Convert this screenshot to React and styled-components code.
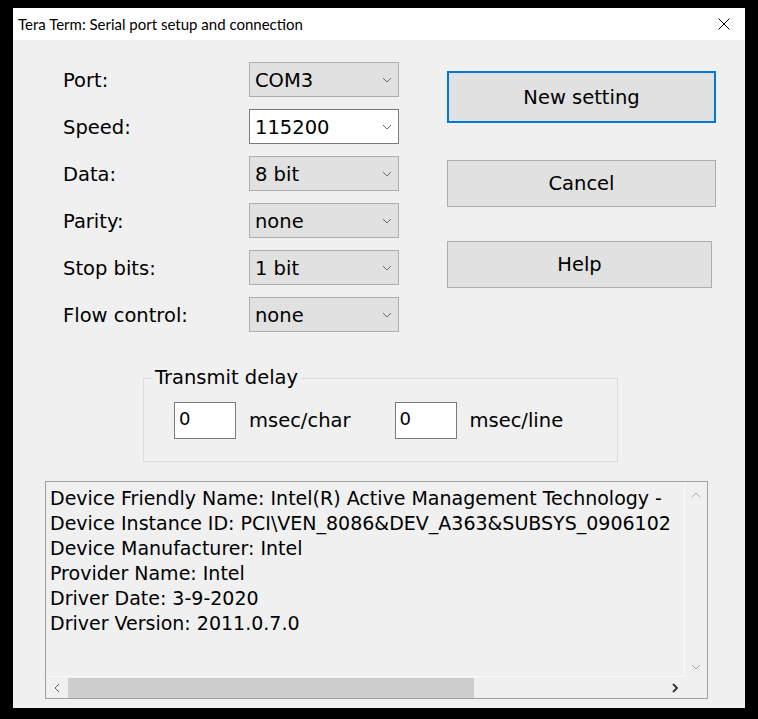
import React from 'react';
import styled, { createGlobalStyle } from 'styled-components';

const GlobalStyle = createGlobalStyle`
  html, body {
    margin: 0;
    padding: 0;
    background: #000;
  }
  #root {
    min-height: 719px;
    overflow: hidden;
  }
`;

const FIELDS = [
  { label: 'Port:', value: 'COM3' },
  { label: 'Speed:', value: '115200', focused: true },
  { label: 'Data:', value: '8 bit' },
  { label: 'Parity:', value: 'none' },
  { label: 'Stop bits:', value: '1 bit' },
  { label: 'Flow control:', value: 'none' },
];

// only the part that fits in the box is shown, as in the dialog
const DEVICE_INFO = [
  'Device Friendly Name: Intel(R) Active Management Technology -',
  'Device Instance ID: PCI\\VEN_8086&DEV_A363&SUBSYS_0906102',
  'Device Manufacturer: Intel',
  'Provider Name: Intel',
  'Driver Date: 3-9-2020',
  'Driver Version: 2011.0.7.0',
];

function Chevron({ dir = 'down', color = '#707070', bold }) {
  const pts = {
    down: '1,1 5,5 9,1',
    up: '1,5 5,1 9,5',
    left: '5,1 1,5 5,9',
    right: '1,1 5,5 1,9',
  }[dir];
  const vertical = dir === 'down' || dir === 'up';
  return (
    <svg width={vertical ? 10 : 6} height={vertical ? 6 : 10} viewBox={vertical ? '0 0 10 6' : '0 0 6 10'}>
      <polyline points={pts} fill="none" stroke={color} strokeWidth={bold ? 2 : 1} />
    </svg>
  );
}

function App() {
  return (
    <>
      <GlobalStyle />
      <Dialog>
        <TitleBar>
          <Title>Tera Term: Serial port setup and connection</Title>
          <CloseBox>
            <svg width="12" height="12" viewBox="0 0 12 12">
              <path d="M0.5 0.5 L11.5 11.5 M11.5 0.5 L0.5 11.5" stroke="#000" strokeWidth="1" />
            </svg>
          </CloseBox>
        </TitleBar>

        <TopSection>
          <FormGrid>
            {FIELDS.map((f) => (
              <React.Fragment key={f.label}>
                <Label>{f.label}</Label>
                <Combo focused={f.focused}>
                  <span>{f.value}</span>
                  <Chevron dir="down" color="#6a6a6a" />
                </Combo>
              </React.Fragment>
            ))}
          </FormGrid>
          <ButtonColumn>
            <Button primary>New setting</Button>
            <Button gap={37}>Cancel</Button>
            <Button gap={34} narrow>Help</Button>
          </ButtonColumn>
        </TopSection>

        <GroupBox>
          <Legend>Transmit delay</Legend>
          <DelayRow>
            <NumberInput>0</NumberInput>
            <UnitLabel>msec/char</UnitLabel>
            <NumberInput>0</NumberInput>
            <UnitLabel>msec/line</UnitLabel>
          </DelayRow>
        </GroupBox>

        <InfoBox>
          <InfoText>
            {DEVICE_INFO.map((line) => (
              <InfoLine key={line}>{line}</InfoLine>
            ))}
          </InfoText>
          <VScroll>
            <Chevron dir="up" color="#a8a8a8" />
            <Chevron dir="down" color="#a8a8a8" />
          </VScroll>
          <HScroll>
            <ArrowCell>
              <Chevron dir="left" color="#606060" />
            </ArrowCell>
            <Track>
              <Thumb />
            </Track>
            <ArrowCell>
              <Chevron dir="right" color="#3c3c3c" bold />
            </ArrowCell>
          </HScroll>
          <Corner />
        </InfoBox>
      </Dialog>
    </>
  );
}

export default App;

const Dialog = styled.div`
  width: 732px;
  height: 700px;
  margin: 8px 0 0 13px;
  background: #f0f0f0;
  display: flex;
  flex-direction: column;
  font-family: 'DejaVu Sans', Verdana, sans-serif;
  color: #000;
`;

const TitleBar = styled.div`
  height: 32px;
  background: #fff;
  display: flex;
  align-items: center;
  justify-content: space-between;
  padding-left: 5px;
`;

const Title = styled.span`
  font-family: Lato, 'Liberation Sans', sans-serif;
  font-size: 15px;
  color: #000;
`;

const CloseBox = styled.div`
  width: 42px;
  height: 32px;
  display: flex;
  align-items: center;
  justify-content: center;
`;

const TopSection = styled.div`
  display: flex;
  align-items: flex-start;
  padding: 22px 0 0 50px;
`;

const FormGrid = styled.div`
  display: grid;
  grid-template-columns: 186px 150px;
  grid-auto-rows: 35px;
  row-gap: 12px;
`;

const Label = styled.div`
  display: flex;
  align-items: center;
  font-size: 19.5px;
  padding-top: 2px;
`;

const Combo = styled.div`
  box-sizing: border-box;
  display: flex;
  align-items: center;
  justify-content: space-between;
  padding: 0 6px 0 5px;
  background: ${(p) => (p.focused ? '#fff' : '#e1e1e1')};
  border: 1px solid ${(p) => (p.focused ? '#7a7a7a' : '#adadad')};
  font-size: 19.5px;
  span {
    padding-top: 1px;
  }
`;

const ButtonColumn = styled.div`
  display: flex;
  flex-direction: column;
  margin: 9px 0 0 48px;
`;

const Button = styled.div`
  box-sizing: border-box;
  width: ${(p) => (p.narrow ? 265 : 269)}px;
  height: ${(p) => (p.primary ? 52 : 47)}px;
  margin-top: ${(p) => p.gap || 0}px;
  display: flex;
  align-items: center;
  justify-content: center;
  background: #e1e1e1;
  border: ${(p) => (p.primary ? '2px solid #0078d7' : '1px solid #adadad')};
  font-size: 19.5px;
`;

const GroupBox = styled.fieldset`
  box-sizing: border-box;
  width: 475px;
  margin: 35px 0 0 130px;
  padding: 13px 0 22px 0;
  border: 1px solid #dcdcdc;
`;

const Legend = styled.legend`
  margin-left: 9px;
  padding: 0 2px;
  font-size: 19.5px;
  line-height: 22px;
`;

const DelayRow = styled.div`
  display: flex;
  align-items: center;
  padding-left: 30px;
`;

const NumberInput = styled.div`
  box-sizing: border-box;
  width: 62px;
  height: 37px;
  padding: 5px 0 0 4px;
  background: #fff;
  border: 1px solid #7a7a7a;
  font-size: 18px;
  line-height: 22px;
  & ~ & {
    margin-left: 44px;
  }
`;

const UnitLabel = styled.span`
  margin-left: 13px;
  font-size: 19.5px;
`;

const InfoBox = styled.div`
  box-sizing: border-box;
  height: 218px;
  margin: 19px 37px 0 32px;
  border: 1px solid #a0a0a0;
  display: grid;
  grid-template-columns: 1fr 22px;
  grid-template-rows: 1fr 21px;
`;

const InfoText = styled.div`
  overflow: hidden;
  padding: 4px 0 0 4px;
  border-right: 1px solid #fafafa;
  border-bottom: 1px solid #fafafa;
`;

const InfoLine = styled.div`
  font-size: 19px;
  line-height: 25px;
  white-space: nowrap;
`;

const VScroll = styled.div`
  display: flex;
  flex-direction: column;
  justify-content: space-between;
  align-items: center;
  padding: 10px 0 7px;
`;

const HScroll = styled.div`
  display: flex;
  align-items: stretch;
`;

const ArrowCell = styled.div`
  width: 21px;
  display: flex;
  align-items: center;
  justify-content: center;
`;

const Track = styled.div`
  flex: 1;
  display: flex;
  align-items: stretch;
  padding: 1px 0 0 1px;
`;

const Thumb = styled.div`
  width: 406px;
  background: #cdcdcd;
`;

const Corner = styled.div`
  background: #f0f0f0;
`;
